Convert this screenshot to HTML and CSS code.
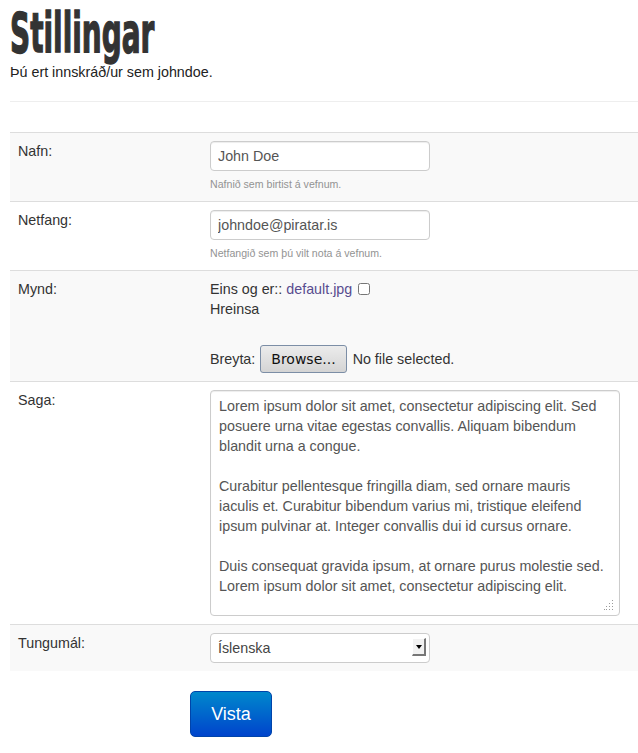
FILE: index.html
```html
<!DOCTYPE html>
<html lang="is">
<head>
<meta charset="utf-8">
<title>Stillingar</title>
<link rel="stylesheet" href="styles.css">
</head>
<body>
<div class="page">
  <header class="head">
    <h1 class="title"><span class="title-text">Stillingar</span></h1>
    <p class="lead">Þú ert innskráð/ur sem johndoe.</p>
  </header>
  <hr class="rule">
  <form class="form">
    <div class="rows">
      <div class="row odd">
        <div class="label">Nafn:</div>
        <div class="field">
          <input class="text-input" type="text" value="John Doe">
          <div class="help">Nafnið sem birtist á vefnum.</div>
        </div>
      </div>
      <div class="row">
        <div class="label">Netfang:</div>
        <div class="field">
          <input class="text-input" type="text" value="johndoe@piratar.is">
          <div class="help">Netfangið sem þú vilt nota á vefnum.</div>
        </div>
      </div>
      <div class="row odd">
        <div class="label">Mynd:</div>
        <div class="field">
          <div class="current">Eins og er:: <a class="file-link" href="#">default.jpg</a> <input class="check" type="checkbox"></div>
          <div class="clear-label">Hreinsa</div>
          <div class="file-line">
            <span>Breyta:</span>
            <button class="browse" type="button">Browse...</button>
            <span>No file selected.</span>
          </div>
        </div>
      </div>
      <div class="row">
        <div class="label">Saga:</div>
        <div class="field">
          <div class="bio-wrap">
            <textarea class="bio">Lorem ipsum dolor sit amet, consectetur adipiscing elit. Sed posuere urna vitae egestas convallis. Aliquam bibendum blandit urna a congue.

Curabitur pellentesque fringilla diam, sed ornare mauris iaculis et. Curabitur bibendum varius mi, tristique eleifend ipsum pulvinar at. Integer convallis dui id cursus ornare.

Duis consequat gravida ipsum, at ornare purus molestie sed. Lorem ipsum dolor sit amet, consectetur adipiscing elit.</textarea>
            <svg class="grip" width="10" height="10" viewBox="0 0 10 10">
              <g fill="#9a9a9a">
                <rect x="8" y="0" width="1" height="1"/>
                <rect x="5" y="3" width="1" height="1"/>
                <rect x="8" y="3" width="1" height="1"/>
                <rect x="2" y="6" width="1" height="1"/>
                <rect x="5" y="6" width="1" height="1"/>
                <rect x="8" y="6" width="1" height="1"/>
                <rect x="0" y="9" width="1" height="1"/>
                <rect x="2" y="9" width="1" height="1"/>
                <rect x="5" y="9" width="1" height="1"/>
                <rect x="8" y="9" width="1" height="1"/>
              </g>
            </svg>
          </div>
        </div>
      </div>
      <div class="row odd last">
        <div class="label">Tungumál:</div>
        <div class="field">
          <div class="select-wrap">
            <select class="select">
              <option>Íslenska</option>
              <option>English</option>
            </select>
            <span class="select-arrow"><svg width="6" height="4" viewBox="0 0 6 4"><path d="M0 0H6L3 4Z" fill="#000"/></svg></span>
          </div>
        </div>
      </div>
    </div>
    <div class="actions">
      <button class="btn-primary" type="submit">Vista</button>
    </div>
  </form>
</div>
</body>
</html>
```

FILE: styles.css
```css
* { box-sizing: border-box; }

body {
  margin: 0;
  font-family: "Liberation Sans", Arial, sans-serif;
  font-size: 14.3px;
  line-height: 20px;
  color: #333;
  background: #fff;
}

.page {
  padding-left: 10px;
}

.title {
  margin: 5px 0 0;
  font-family: "DejaVu Sans Condensed", "Liberation Sans", sans-serif;
  font-weight: bold;
  font-size: 56px;
  line-height: 56px;
  color: #333;
  height: 56px;
}

.title-text {
  display: inline-block;
  transform: scaleX(0.555);
  transform-origin: left center;
  -webkit-text-stroke: 1.4px #333;
  letter-spacing: 0;
}

.lead {
  margin: 1px 0 0;
  line-height: 20px;
  color: #222;
}

.rule {
  margin: 19px 0 0;
  border: 0;
  border-top: 1px solid #eee;
  height: 0;
}

.rows {
  margin-top: 30px;
}

.row {
  display: grid;
  grid-template-columns: 192px 1fr;
  border-top: 1px solid #ddd;
}

.row.odd {
  background: #f9f9f9;
}

.label,
.field {
  padding: 8px;
}

.text-input {
  display: block;
  width: 220px;
  height: 30px;
  padding: 4px 7px;
  border: 1px solid #ccc;
  border-radius: 4px;
  background: #fff;
  font-family: inherit;
  font-size: 14.3px;
  line-height: 20px;
  color: #555;
  box-shadow: inset 0 1px 1px rgba(0,0,0,0.075);
  margin: 0;
}

.help {
  margin-top: 4px;
  font-size: 10.6px;
  line-height: 18px;
  color: #939393;
}

.current,
.clear-label {
  line-height: 20px;
}

.file-link {
  color: #584c8f;
  text-decoration: none;
}

.check {
  width: 12px;
  height: 12px;
  margin: 0 0 0 2px;
  vertical-align: -1px;
}

.file-line {
  margin-top: 26px;
  display: flex;
  align-items: center;
  gap: 5px;
  height: 28px;
}

.browse {
  height: 28px;
  padding: 0 10px;
  border: 1px solid #7c8ea6;
  border-radius: 3px;
  background: linear-gradient(#ececec, #d4d4d4);
  font-family: "DejaVu Sans", sans-serif;
  font-size: 14px;
  color: #111;
  margin-right: 1px;
}

.bio-wrap {
  position: relative;
  width: 410px;
}

.bio {
  display: block;
  width: 410px;
  height: 226px;
  margin: 0;
  padding: 5px 8px;
  border: 1px solid #ccc;
  border-radius: 4px;
  font-family: "Liberation Sans", Arial, sans-serif;
  font-size: 14.3px;
  line-height: 20px;
  color: #555;
  background: #fff;
  resize: none;
  overflow: hidden;
  box-shadow: inset 0 1px 1px rgba(0,0,0,0.075);
}

.grip {
  position: absolute;
  right: 6px;
  bottom: 6px;
}

.select-wrap {
  position: relative;
  width: 220px;
  height: 30px;
}

.select {
  appearance: none;
  -webkit-appearance: none;
  display: block;
  width: 220px;
  height: 30px;
  padding: 4px 7px;
  border: 1px solid #ccc;
  border-radius: 4px;
  background: #fff;
  font-family: inherit;
  font-size: 14.3px;
  color: #444;
  margin: 0;
}

.select-arrow {
  position: absolute;
  right: 4px;
  top: 5px;
  width: 14px;
  height: 18px;
  background: #f2f2f2;
  border-top: 1px solid #fff;
  border-left: 1px solid #fff;
  border-right: 2px solid #777;
  border-bottom: 2px solid #777;
  display: flex;
  align-items: center;
  justify-content: center;
  pointer-events: none;
}

.actions {
  padding: 20px 0 0 180px;
}

.btn-primary {
  height: 46px;
  width: 82px;
  padding: 0;
  border: 1px solid #0044aa;
  border-radius: 5px;
  background: linear-gradient(#0088cc, #0044cc);
  color: #fff;
  font-family: "Liberation Sans", Arial, sans-serif;
  font-size: 18px;
  line-height: 24px;
}
```
